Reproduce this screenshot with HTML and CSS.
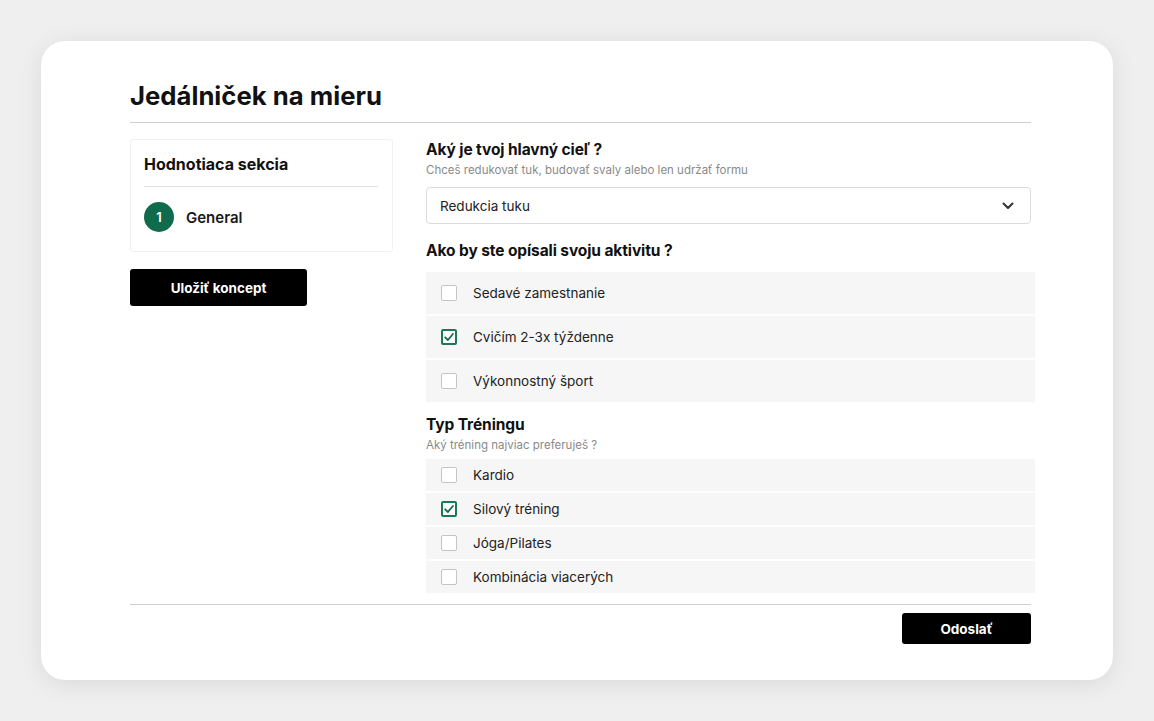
FILE: index.html
```html
<!DOCTYPE html>
<html lang="sk">
<head>
<meta charset="utf-8">
<title>Jedálniček na mieru</title>
<link rel="stylesheet" href="styles.css">
</head>
<body>
<main class="card">
  <h1 class="page-title">Jedálniček na mieru</h1>
  <div class="layout">
    <aside class="side">
      <div class="sections">
        <h2 class="sections-title">Hodnotiaca sekcia</h2>
        <div class="step">
          <span class="step-num">1</span>
          <span class="step-label">General</span>
        </div>
      </div>
      <button class="btn btn-draft" type="button">Uložiť koncept</button>
    </aside>
    <section class="form">
      <div class="q">
        <h3 class="q-title">Aký je tvoj hlavný cieľ ?</h3>
        <p class="q-sub">Chceš redukovať tuk, budovať svaly alebo len udržať formu</p>
        <div class="select">
          <span>Redukcia tuku</span>
          <svg class="chev" width="12" height="8" viewBox="0 0 12 8"><path d="M1.5 1.5 6 6l4.5-4.5" fill="none" stroke="#333" stroke-width="2" stroke-linecap="round" stroke-linejoin="round"/></svg>
        </div>
      </div>
      <div class="q q-activity">
        <h3 class="q-title">Ako by ste opísali svoju aktivitu ?</h3>
        <ul class="opts opts-tall">
          <li class="opt"><span class="box"></span>Sedavé zamestnanie</li>
          <li class="opt"><span class="box on"><svg width="12" height="12" viewBox="0 0 12 12"><path d="M2.2 6.3 4.9 9 9.9 3" fill="none" stroke="#156b4d" stroke-width="1.8" stroke-linecap="round" stroke-linejoin="round"/></svg></span>Cvičím 2-3x týždenne</li>
          <li class="opt"><span class="box"></span>Výkonnostný šport</li>
        </ul>
      </div>
      <div class="q q-training">
        <h3 class="q-title">Typ Tréningu</h3>
        <p class="q-sub">Aký tréning najviac preferuješ ?</p>
        <ul class="opts opts-short">
          <li class="opt"><span class="box"></span>Kardio</li>
          <li class="opt"><span class="box on"><svg width="12" height="12" viewBox="0 0 12 12"><path d="M2.2 6.3 4.9 9 9.9 3" fill="none" stroke="#156b4d" stroke-width="1.8" stroke-linecap="round" stroke-linejoin="round"/></svg></span>Silový tréning</li>
          <li class="opt"><span class="box"></span>Jóga/Pilates</li>
          <li class="opt"><span class="box"></span>Kombinácia viacerých</li>
        </ul>
      </div>
    </section>
  </div>
  <footer class="foot">
    <button class="btn btn-send" type="button">Odoslať</button>
  </footer>
</main>
</body>
</html>
```
FILE: styles.css
```css
* { box-sizing: border-box; }

html, body {
  margin: 0;
  height: 100%;
}

body {
  background: #efefef;
  padding: 41px 41px 0 41px;
  font-family: "Inter", "Liberation Sans", sans-serif;
  color: #111;
}

.card {
  width: 1072px;
  height: 639px;
  background: #fff;
  border-radius: 24px;
  box-shadow: 0 4px 24px rgba(0, 0, 0, 0.09);
  padding: 39px 82px 0 89px;
}

.page-title {
  margin: 0;
  font-size: 25.7px;
  line-height: 32px;
  font-weight: 700;
  padding-bottom: 10px;
  border-bottom: 1px solid #cfcfcf;
}

.layout {
  display: grid;
  grid-template-columns: 263px 605px;
  column-gap: 33px;
  margin-top: 16px;
  height: 465px;
}

/* left column */
.sections {
  border: 1px solid #f1f1f1;
  border-radius: 3px;
  padding: 13px 14px 19px 13px;
  height: 113px;
}

.sections-title {
  margin: 0;
  font-size: 16px;
  line-height: 22px;
  font-weight: 700;
  padding-bottom: 11px;
  border-bottom: 1px solid #e2e2e2;
}

.step {
  display: flex;
  align-items: center;
  gap: 12px;
  margin-top: 15px;
}

.step-num {
  width: 30px;
  height: 30px;
  border-radius: 50%;
  background: #0f6b4c;
  color: #fff;
  font-size: 13px;
  font-weight: 600;
  display: flex;
  align-items: center;
  justify-content: center;
}

.step-label {
  font-size: 15px;
  font-weight: 600;
  color: #1a1a1a;
}

.btn {
  background: #000;
  color: #fff;
  border: 0;
  border-radius: 3px;
  font-family: inherit;
  font-weight: 700;
  font-size: 13.5px;
  cursor: pointer;
}

.btn-draft {
  width: 177px;
  height: 37px;
  margin-top: 17px;
}

/* right column */
.q-title {
  margin: 0;
  font-size: 15.5px;
  line-height: 22px;
  font-weight: 700;
  letter-spacing: -0.1px;
}

.q-sub {
  margin: 1px 0 0;
  font-size: 11.5px;
  line-height: 16px;
  color: #8a8a8a;
}

.select {
  margin-top: 9px;
  height: 37px;
  border: 1px solid #dcdcdc;
  border-radius: 4px;
  display: flex;
  align-items: center;
  justify-content: space-between;
  padding: 0 16px 0 13px;
  font-size: 13.5px;
  color: #222;
}

.q-activity { margin-top: 16px; }
.q-training { margin-top: 12px; }

.opts {
  list-style: none;
  margin: 0;
  padding: 0;
  display: flex;
  flex-direction: column;
  gap: 2px;
}

.opts-tall { margin-top: 10px; }
.opts-short { margin-top: 6px; }

.opt {
  display: flex;
  align-items: center;
  gap: 16px;
  padding-left: 15px;
  background: #f6f6f6;
  box-shadow: 0 0 3px rgba(0, 0, 0, 0.02);
  font-size: 13.5px;
  color: #222;
  width: 609px;
}

.opts-tall .opt { height: 42px; }
.opts-short .opt { height: 32px; }

.box {
  width: 16px;
  height: 16px;
  border: 1.5px solid #c4c4c4;
  border-radius: 2px;
  background: #fff;
  display: flex;
  align-items: center;
  justify-content: center;
  flex: none;
}

.box.on {
  border: 2px solid #1a7a58;
}

/* footer */
.foot {
  border-top: 1px solid #cfcfcf;
  display: flex;
  justify-content: flex-end;
  padding-top: 8px;
}

.btn-send {
  width: 129px;
  height: 31px;
}
```
